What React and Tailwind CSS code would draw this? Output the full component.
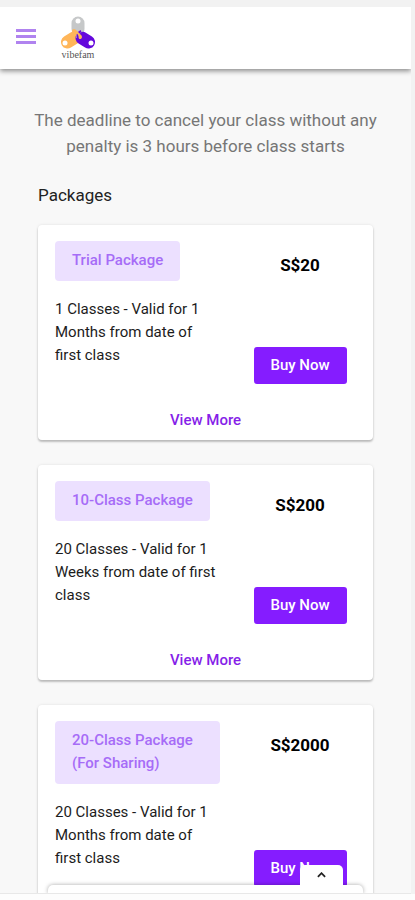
import React from 'react'

const packages = [
    { name: 'Trial Package', description: '1 Classes - Valid for 1 Months from date of first class', price: 'S$20', link: '#trial' },
    { name: '10-Class Package', description: '20 Classes - Valid for 1 Weeks from date of first class', price: 'S$200', link: '#ten-class' },
    { name: '20-Class Package (For Sharing)', description: '20 Classes - Valid for 1 Months from date of first class', price: 'S$2000' },
]

const Logo = () => (
    <div className="flex flex-col items-center w-10">
        <svg viewBox="0 0 36 34" className="w-9 h-[34px]" aria-hidden="true">
            <g strokeLinecap="round" strokeWidth="13" fill="none">
                <path d="M18 7V13" stroke="#c6c8c9" />
                <path d="M7.500 26L14 22" stroke="#ffb659" />
                <path d="M28.500 26L22 22" stroke="#6408dc" />
            </g>
            <path d="M14 15L20 21" stroke="#ffb659" strokeWidth="4" strokeLinecap="round" />
            <path d="M24 14Q17 16 17 22" stroke="#c6c8c9" strokeWidth="2" fill="none" />
            <path d="M21 15Q15 18 19 25" stroke="#6408dc" strokeWidth="2" fill="none" />
            <path d="M17 16L20 20" stroke="#ffb659" strokeWidth="2" />
            <circle cx="18" cy="5" r="2.500" fill="#fff" />
            <circle cx="5" cy="27" r="2.500" fill="#fff" />
            <circle cx="31" cy="27" r="2.500" fill="#fff" />
        </svg>
        <span className="font-['Liberation_Serif',serif] text-[10px] leading-[10px] text-[#555555]">vibefam</span>
    </div>
)

const PackageCard = ({ pack }) => (
    <article className="flex flex-col bg-white rounded-[4px] pt-4 px-[17px] pb-2 shadow-[0_2px_2px_rgba(0,0,0,0.22),0_0_3px_rgba(0,0,0,0.1)]">
        <div className="flex justify-between">
            <div className="w-[165px]">
                <h3 className="w-fit bg-[#ece0ff] text-[#a66cf7] text-[15px] leading-[23px] font-medium rounded-[4px] px-[17px] pt-2 pb-[9px]">
                    {pack.name}
                </h3>
                <p className="mt-[17px] text-[15px] leading-[23px] text-[#1c1c1c]">{pack.description}</p>
            </div>
            <div className="flex flex-col justify-between items-center w-[112px] pt-3">
                <p className="text-[17px] leading-6 font-bold text-black">{pack.price}</p>
                <button className="w-[93px] h-[37px] -mb-[17px] rounded-[3px] bg-[#851cff] text-white text-[15px] font-medium">
                    Buy Now
                </button>
            </div>
        </div>
        <div className="flex justify-center h-[65px] pt-[42px]">
            {pack.link && (
                <a href={pack.link} className="text-[15px] leading-[23px] font-medium text-[#861fe8]">View More</a>
            )}
        </div>
    </article>
)

const App = () => {
    return (
        <div className="h-screen overflow-hidden bg-[#f2f2f2] pt-[7px] font-[Roboto,sans-serif]">
            <div className="h-full flex flex-col">
                <div className="relative flex-1 min-h-0 mr-1 flex flex-col overflow-hidden bg-[#f8f8f8] border-b border-[#e8e8e8]">
                    <header className="relative z-10 flex items-center shrink-0 h-[62px] pl-4 gap-[22px] bg-white shadow-[0_2px_5px_rgba(0,0,0,0.45)]">
                        <button aria-label="Open menu" className="flex flex-col gap-[3px] w-5 mb-1">
                            <span className="h-[3px] w-full bg-[#b083ef]" />
                            <span className="h-[3px] w-full bg-[#b083ef]" />
                            <span className="h-[3px] w-full bg-[#b083ef]" />
                        </button>
                        <Logo />
                    </header>
                    <main className="flex-1 min-h-0 overflow-y-auto [scrollbar-width:none] px-[38px] pt-[38px]">
                        <p className="-mx-2 text-center text-[17px] leading-[26px] text-[#767676]">
                            The deadline to cancel your class without any penalty is 3 hours before class starts
                        </p>
                        <h2 className="mt-6 text-[17px] leading-6 text-[#222222]">Packages</h2>
                        <div className="mt-[18px] flex flex-col gap-[25px]">
                            {packages.map((pack) => (
                                <PackageCard key={pack.name} pack={pack} />
                            ))}
                        </div>
                    </main>
                    <div className="absolute bottom-0 left-12 right-12 h-2 rounded-t-[5px] bg-white shadow-[0_0_4px_rgba(0,0,0,0.35)]">
                        <button aria-label="Expand" className="absolute bottom-2 right-5 flex items-center justify-center w-[43px] h-5 rounded-t-[5px] bg-white">
                            <svg viewBox="0 0 10 6" className="w-[9px] h-[6px]" fill="none" stroke="#222" strokeWidth="2">
                                <path d="M1 5L5 1L9 5" />
                            </svg>
                        </button>
                    </div>
                </div>
                <div className="shrink-0 h-[6px] bg-[#fdfdfd]" />
            </div>
        </div>
    )
}

export default App
